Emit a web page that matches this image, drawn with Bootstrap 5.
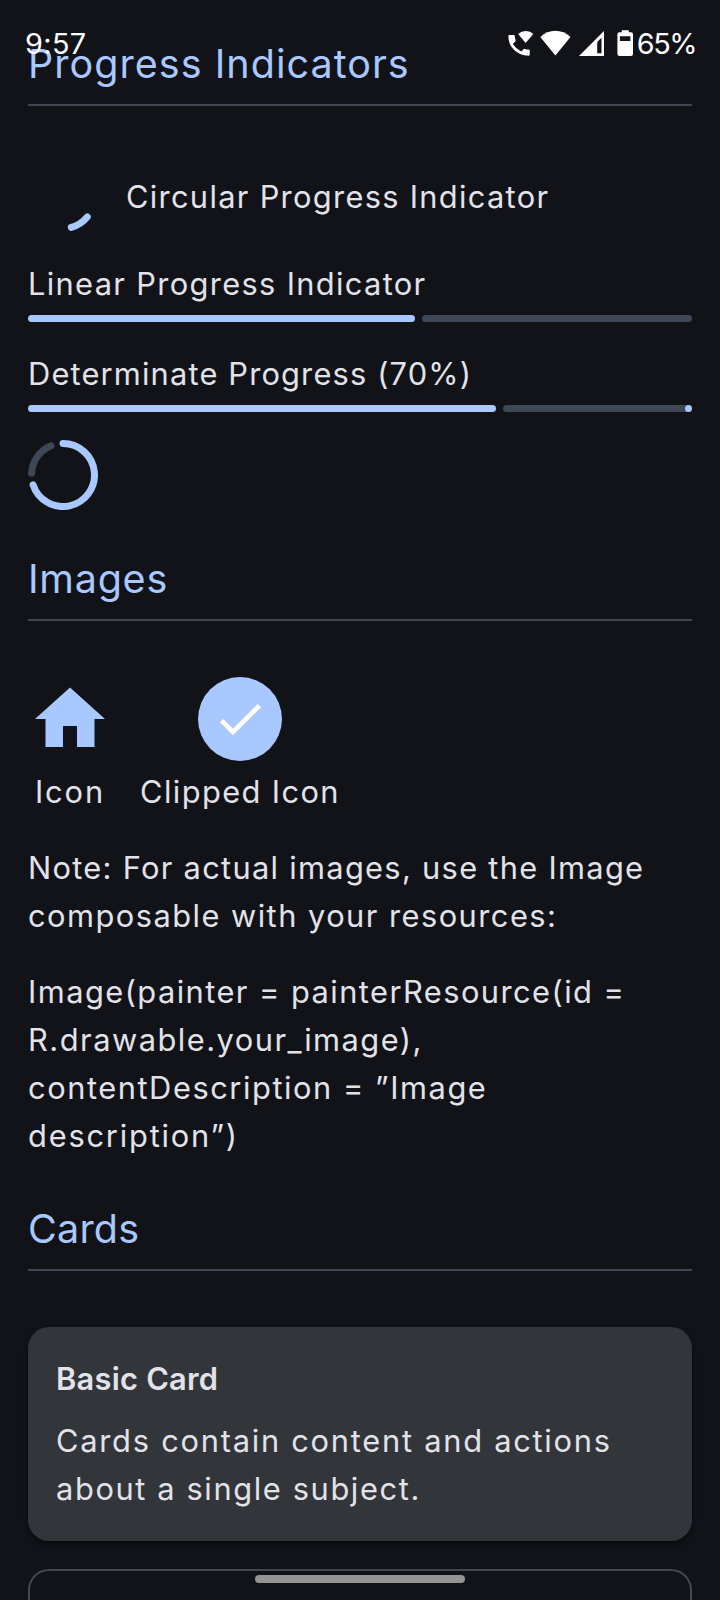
<!DOCTYPE html>
<html lang="en" data-bs-theme="dark">
<head>
<meta charset="utf-8">
<meta name="viewport" content="width=device-width, initial-scale=1">
<title>Component gallery</title>
<link href="https://cdn.jsdelivr.net/npm/bootstrap@5.3.0/dist/css/bootstrap.min.css" rel="stylesheet">
<style>
  :root{--primary:#a8c8ff;--surface:#111318;--on-surface:#e2e2e9;--outline:#44474e;--divider:#424654;--track:#3e4756;--card:#323539}
  html,body{height:1600px;overflow:hidden}
  body{background:var(--surface);color:var(--on-surface);font-family:Inter,"Noto Sans",sans-serif;font-size:30.8px;line-height:48px}
  .screen{height:1600px;padding:35px 28px 0}
  .status{height:88px;padding:0 24px 0 25px;color:#fff;font-size:28.8px;z-index:2}
  .status svg{fill:#fff}
  .section-title{font-size:39.5px;line-height:58px;font-weight:400;color:var(--primary);margin:0 0 11px}
  .rule{height:2px;background:var(--divider);margin-bottom:56px}
  .text-line{display:block;white-space:nowrap}
  .bar{height:7px;gap:7px}
  .bar > div{border-radius:4px;height:7px}
  .bar-active{background:var(--primary)}
  .bar-rest{background:var(--track)}
  .stop-dot{width:7px;height:7px;border-radius:50%;background:var(--primary)}
  .ring{width:70px;height:70px;fill:none;stroke:var(--primary);stroke-width:7;stroke-linecap:round;display:block}
  .avatar{width:84px;height:84px;background:var(--primary)}
  .tile{border-radius:21px;border:0;color:inherit}
  .tile-filled{background:var(--card);padding:28px;height:214px;box-shadow:0 3px 5px rgba(0,0,0,.45)}
  .tile-title{font-size:30.8px;line-height:48px;letter-spacing:.25px;color:inherit}
  .tile-outlined{background:transparent;border:2px solid var(--outline);border-bottom:0;border-radius:21px 21px 0 0;height:31px}
  .home-pill{width:210px;height:8px;background:#939393;bottom:17px}
</style>
</head>
<body>
<header class="status position-absolute top-0 start-0 end-0 d-flex align-items-center justify-content-between">
  <div style="letter-spacing:.4px">9:57</div>
  <div class="d-flex align-items-center">
    <svg width="27" height="28" viewBox="0 0 27 28" style="margin-right:5px"><path d="M.3 6.2Q.3 5 1.5 5H5.7Q6.7 5 6.8 6Q7 8.5 7.6 10.3Q7.8 11 7.3 11.5L4.8 14Q7.8 18.6 13.1 21.6L15.6 19.2Q16.1 18.7 16.8 18.9Q18.5 19.5 20.6 19.6Q21.7 19.7 21.7 20.7V24.7Q21.7 25.8 20.4 25.8Q12 25.8 6.2 20.1Q.3 14.2.3 6.2Z"/><path d="M17.6 13 10.2 3.9Q13.2 1 17.8 1T25.4 3.9Z"/></svg>
    <svg width="32" height="28" viewBox="0 0 32 28" style="margin-right:7px"><path d="M15.4 25.6.3 7.1Q7 .8 15.4.8T30.5 7.1Z"/></svg>
    <svg width="26" height="28" viewBox="0 0 26 28" style="margin-right:12px"><path fill-rule="evenodd" d="M0 26 25 1V26ZM18.2 12V23.2H22.5V7.7Z"/></svg>
    <svg width="17" height="28" viewBox="0 0 17 28" style="margin-right:3px"><path fill-rule="evenodd" d="M4.8.2H11.8V2.3H14Q16 2.3 16 4.3V24Q16 26 14 26H2.4Q.4 26 .4 24V4.3Q.4 2.3 2.4 2.3H4.8ZM2.9 6.2V11H13.4V6.2Z"/></svg>
    <div style="letter-spacing:-1.5px">65%</div>
  </div>
</header>

<main class="screen d-flex flex-column">
  <section class="flex-shrink-0">
    <h2 class="section-title" style="letter-spacing:1.03px">Progress Indicators</h2>
    <div class="rule"></div>
    <div class="d-flex align-items-center" style="gap:28px;margin-bottom:28px">
      <svg class="ring" viewBox="0 0 70 70"><path d="M59.3 54.9A31.5 31.5 0 0 1 43.3 65.4"/></svg>
      <span class="text-line" style="letter-spacing:1.31px">Circular Progress Indicator</span>
    </div>
    <span class="text-line" style="letter-spacing:1.34px">Linear Progress Indicator</span>
    <div class="bar d-flex" style="margin:7px 0 28px">
      <div class="bar-active" style="width:387px"></div><div class="bar-rest flex-fill"></div>
    </div>
    <span class="text-line" style="letter-spacing:1.17px">Determinate Progress (70%)</span>
    <div class="bar d-flex" style="margin:7px 0 28px">
      <div class="bar-active" style="width:468px"></div><div class="bar-rest flex-fill d-flex justify-content-end"><i class="stop-dot"></i></div>
    </div>
    <svg class="ring" viewBox="0 0 70 70"><path d="M3.55 33.2A31.5 31.5 0 0 1 23 5.8" stroke="#3e4756"/><path d="M35 3.5A31.5 31.5 0 1 1 5.04 44.73"/></svg>
  </section>

  <section class="flex-shrink-0" style="margin-top:40px">
    <h2 class="section-title" style="letter-spacing:.75px">Images</h2>
    <div class="rule"></div>
    <div class="d-flex" style="gap:27px">
      <div class="d-flex flex-column align-items-center" style="gap:7px;width:84px">
        <svg width="84" height="84" viewBox="0 0 24 24" fill="#a8c8ff"><path d="M10 20v-6h4v6h5v-8h3L12 3 2 12h3v8z"/></svg>
        <span class="text-line" style="letter-spacing:1.9px">Icon</span>
      </div>
      <div class="d-flex flex-column align-items-center" style="gap:7px;width:202px">
        <div class="avatar rounded-circle d-flex align-items-center justify-content-center">
          <svg width="56" height="56" viewBox="0 0 24 24" fill="#fff"><path d="M9 16.17 4.83 12l-1.42 1.41L9 19 21 7l-1.41-1.41z"/></svg>
        </div>
        <span class="text-line" style="letter-spacing:1.4px">Clipped Icon</span>
      </div>
    </div>
    <p style="margin:28px 0 28px">
      <span class="text-line" style="letter-spacing:1.3px">Note: For actual images, use the Image</span>
      <span class="text-line" style="letter-spacing:1.47px">composable with your resources:</span>
    </p>
    <p class="mb-0">
      <span class="text-line" style="letter-spacing:1.45px">Image(painter = painterResource(id =</span>
      <span class="text-line" style="letter-spacing:1.5px">R.drawable.your_image),</span>
      <span class="text-line" style="letter-spacing:1.55px">contentDescription = ”Image</span>
      <span class="text-line" style="letter-spacing:1.8px">description”)</span>
    </p>
  </section>

  <section class="flex-shrink-0" style="margin-top:40px">
    <h2 class="section-title" style="letter-spacing:.2px">Cards</h2>
    <div class="rule"></div>
    <div class="card tile tile-filled">
      <h3 class="text-line tile-title m-0 fw-semibold">Basic Card</h3>
      <p class="mb-0" style="margin-top:14px">
        <span class="text-line" style="letter-spacing:1.75px">Cards contain content and actions</span>
        <span class="text-line" style="letter-spacing:1.62px">about a single subject.</span>
      </p>
    </div>
    <div class="card tile tile-outlined" style="margin-top:28px"></div>
  </section>
</main>
<div class="home-pill position-absolute start-50 translate-middle-x rounded-pill"></div>
</body>
</html>
